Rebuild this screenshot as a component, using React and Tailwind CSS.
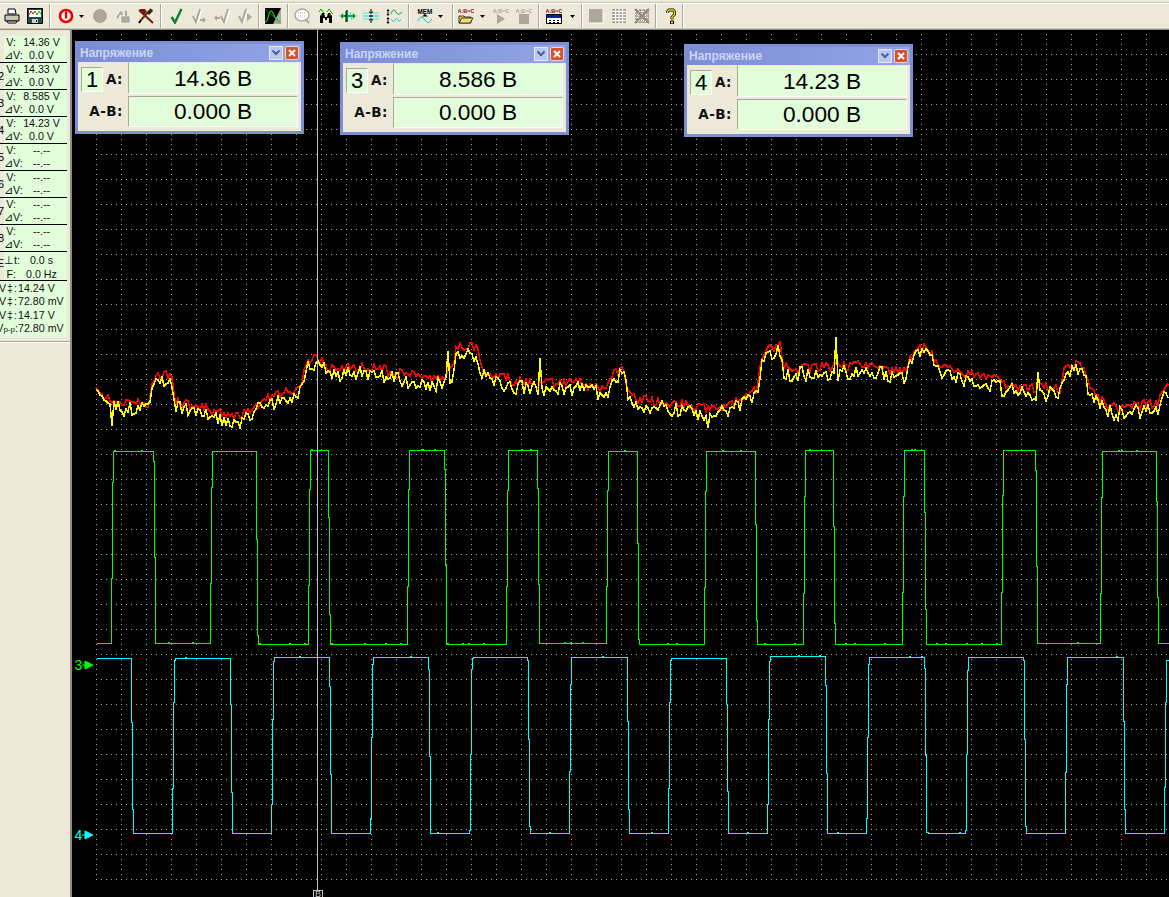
import React from "react";

const FONT = "[font-family:'Liberation_Sans',Arial,sans-serif]";

function rng(seed) {
  let a = seed;
  return () => {
    a |= 0; a = (a + 0x6d2b79f5) | 0;
    let t = Math.imul(a ^ (a >>> 15), 1 | a);
    t = (t + Math.imul(t ^ (t >>> 7), 61 | t)) ^ t;
    return ((t ^ (t >>> 14)) >>> 0) / 4294967296;
  };
}

const GREEN = [[110,578],[111,482],[112,451],[151,461],[152,557],[153,643],[206,583],[207,487],[208,451],[251,539],[252,635],[253,644],[301,585],[302,489],[303,450],[320,517],[321,614],[322,644],[397,586],[398,489],[399,450],[433,469],[434,565],[435,644],[493,586],[494,490],[495,450],[523,488],[524,584],[525,643],[589,586],[590,490],[591,451],[637,543],[638,639],[639,644],[702,587],[703,491],[704,451],[751,524],[752,620],[753,644],[798,593],[799,496],[800,450],[827,526],[828,623],[829,644],[894,592],[895,496],[896,450],[915,512],[916,609],[917,644],[990,592],[991,495],[992,450],[1023,470],[1024,566],[1025,643],[1086,593],[1087,497],[1088,451],[1140,501],[1141,597],[1142,643],[1169,643]].map(([x, y], i, all) => {
  if (i === all.length - 1) return [x, y];
  return [Math.round(x < 630 ? 90 + (x - 90) * 1.0331 : 630 + (x - 630) * 1.0313), y];
});
const CYAN = [[131,722],[132,809],[133,833],[172,788],[173,702],[174,660],[175,658],[230,704],[231,792],[232,833],[271,804],[272,719],[273,661],[274,657],[329,686],[330,774],[331,833],[370,818],[371,737],[372,664],[373,657],[428,669],[429,756],[430,833],[469,830],[470,754],[471,669],[472,658],[473,657],[527,660],[528,739],[529,826],[530,833],[569,771],[570,684],[571,657],[627,721],[628,809],[629,833],[668,788],[669,702],[670,660],[671,658],[726,704],[727,791],[728,833],[767,804],[768,719],[769,661],[770,656],[825,685],[826,773],[827,833],[866,818],[867,737],[868,664],[869,657],[924,668],[925,755],[926,832],[928,833],[965,830],[966,754],[967,670],[968,657],[1023,660],[1024,739],[1025,826],[1026,833],[1065,772],[1066,684],[1067,657],[1123,721],[1124,809],[1125,833],[1164,787],[1165,702],[1166,660],[1169,658]];

function stepPath(start, pts, prob, seed) {
  const r = rng(seed);
  let [x, y] = start;
  let d = `M${x} ${y}`;
  for (const [nx, ny] of pts) {
    let cx = x;
    while (cx + 3 < nx) {
      if (r() < prob) d += `H${cx + 1}V${y - 1}H${cx + 2}V${y}`;
      cx += 3;
    }
    d += `H${nx}V${ny}`;
    x = nx; y = ny;
  }
  return d;
}

const BASE = [[96,392],[110,405],[123,407],[140,407],[148,408],[153,385],[162,378],[172,380],[175,405],[190,410],[207,413],[223,418],[240,421],[253,410],[270,402],[290,395],[302,388],[307,362],[323,363],[327,373],[357,372],[380,373],[413,380],[443,383],[452,373],[457,350],[477,352],[482,375],[513,385],[540,387],[580,387],[607,393],[612,380],[623,373],[628,393],[637,403],[680,408],[707,413],[740,405],[757,393],[762,362],[770,353],[780,347],[783,372],[830,372],[870,368],[903,377],[913,357],[927,350],[940,372],[987,382],[1023,392],[1060,392],[1065,372],[1083,367],[1088,388],[1107,410],[1120,412],[1130,410],[1157,408],[1167,393],[1170,392]];
const SPIKES = { 112: 426, 240: 428, 448: 351, 540: 358, 708: 428, 836: 337, 1038: 372, 1118: 420 };

function baseAt(x) {
  for (let i = 1; i < BASE.length; i++) {
    if (x <= BASE[i][0]) {
      const [x0, y0] = BASE[i - 1], [x1, y1] = BASE[i];
      return y0 + ((y1 - y0) * (x - x0)) / (x1 - x0);
    }
  }
  return 392;
}

function noisy(amp, off, seed, spikes) {
  const r = rng(seed);
  let d = "";
  for (let x = 96; x <= 1169; x += 2) {
    let y = baseAt(x) + off + (r() - 0.5) * amp;
    if (spikes && SPIKES[x] !== undefined) y = SPIKES[x];
    d += `${d ? "L" : "M"}${x} ${Math.round(y)}`;
  }
  return d;
}

const SECTIONS = [
  ["", "14.36 V", "0.0 V"],
  ["2", "14.33 V", "0.0 V"],
  ["3", "8.585 V", "0.0 V"],
  ["4", "14.23 V", "0.0 V"],
  ["5", "--.--", "--.--"],
  ["6", "--.--", "--.--"],
  ["7", "--.--", "--.--"],
  ["8", "--.--", "--.--"],
];

function Section({ item }) {
  return (
    <div className="flex h-[27px] border-b border-black">
      <div className="flex w-[4px] justify-end overflow-hidden text-[11px] leading-[26px] text-black">
        <span className="shrink-0">{item[0]}</span>
      </div>
      <div className="w-[63px] bg-[#e1fdda] text-[10.67px] leading-[13px] text-[#111]">
        <div className="flex h-[13px]">
          <span className="w-[12px] shrink-0 text-right">V:</span>
          <span className="flex-1 text-center">{item[1]}</span>
        </div>
        <div className="flex h-[13px]">
          <span className="w-[12px] shrink-0 text-right whitespace-nowrap">⊿V:</span>
          <span className="flex-1 text-center">{item[2]}</span>
        </div>
      </div>
    </div>
  );
}

function LeftPanel() {
  return (
    <div className={`flex h-full w-[72px] shrink-0 flex-col border-r-2 border-[#8f8c80] bg-[#ece9d8] pt-[6px] ${FONT}`}>
      <div className="w-[67px]">
        {SECTIONS.map((s, i) => (
          <Section key={i} item={s} />
        ))}
        <div className="flex h-[29px] border-b border-black">
          <div className="flex w-[4px] justify-end overflow-hidden text-[11px] leading-[22px] text-black">
            <span className="shrink-0">E</span>
          </div>
          <div className="w-[63px] bg-[#e1fdda] pt-px text-[10.67px] leading-[14px] text-[#111]">
            <div className="flex h-[14px]">
              <span className="w-[12px] shrink-0 text-right whitespace-nowrap">⊥t:</span>
              <span className="flex-1 text-center">0.0 s</span>
            </div>
            <div className="flex h-[14px]">
              <span className="w-[12px] shrink-0 text-right">F:</span>
              <span className="flex-1 text-center">0.0 Hz</span>
            </div>
          </div>
        </div>
        <div className="h-[56px] bg-[#e1fdda] pt-[1px] text-[10.67px] leading-[13.4px] text-[#111]">
          {["14.24 V", "72.80 mV", "14.17 V", "72.80 mV"].map((v, i) => (
            <div key={i} className="flex h-[13.4px] whitespace-nowrap">
              <div className="flex w-[18px] shrink-0 justify-end overflow-hidden">
                {i === 3 ? (
                  <span className="shrink-0">V<span className="text-[8px]">p-p</span>:</span>
                ) : (
                  <span className="shrink-0 tracking-[1px]">V‡:</span>
                )}
              </div>
              <span>{v}</span>
            </div>
          ))}
        </div>
      </div>
      <div className="mt-[4px] h-[2px] border-t border-[#aca899] bg-white" />
    </div>
  );
}

function Sep({ className }) {
  return <div className={`h-[24px] w-[2px] border-l border-[#aca899] bg-white ${className}`} />;
}

function Arrow({ className }) {
  return (
    <svg width="5" height="3" viewBox="0 0 5 3" className={className}>
      <path d="M0 0h5L2.5 3z" fill="#000" />
    </svg>
  );
}

function Ico({ className, children }) {
  return (
    <svg width="16" height="16" viewBox="0 0 16 16" className={`shrink-0 ${className}`}>
      {children}
    </svg>
  );
}

const GC = "#aca899";

function GrayCheck({ extra }) {
  return (
    <>
      <path d="M2 8l3 6 4-13" fill="none" stroke="#fff" strokeWidth="2.4" transform="translate(1 1)" />
      <path d="M2 8l3 6 4-13" fill="none" stroke={GC} strokeWidth="2" />
      {extra}
    </>
  );
}

function AbcText({ fill, y = 5 }) {
  return (
    <text x="8" y={y} textAnchor="middle" fontSize="5.6" fontWeight="700" fontFamily="Liberation Sans, sans-serif" fill={fill}>
      A:B=C
    </text>
  );
}

function Toolbar() {
  return (
    <div className="h-[30px] shrink-0 bg-[#ece9d8]">
      <div className="h-[3px] border-b border-[#c9c6b6]" />
      <div className="h-[1px] bg-white" />
      <div className="flex h-[24px] items-center pl-[4px]">
        <Ico>
          <path d="M4 1h7l1 5H4z" fill="#fff" stroke="#000" />
          <path d="M1 7h14v6H1z" fill="#c8c8c8" stroke="#000" />
          <path d="M3 13l1 2h8l1-2z" fill="#fff" stroke="#000" />
          <path d="M9 9h4v1H9z" fill="#e8d800" />
          <path d="M3 6h10" stroke="#666" />
        </Ico>
        <Ico className="ml-[7px]">
          <path d="M.5.5h15v15H.5z" fill="#1f4d4d" stroke="#000" />
          <path d="M2 2h12v7H2z" fill="#fff" />
          <path d="M2 7l2-4 2 3 2-3" fill="none" stroke="#e00" />
          <path d="M8 3l2 4 2-4 2 3" fill="none" stroke="#0b0" />
          <path d="M5 11h6v4H5z" fill="#d0d0d0" />
          <path d="M9 12h1v2H9z" fill="#000" />
        </Ico>
        <Sep className="ml-[6px]" />
        <Ico className="ml-[7px]">
          <circle cx="8" cy="8" r="6" fill="#fff" stroke="#e00" strokeWidth="2.6" />
          <path d="M8 3.500v7" stroke="#e00" strokeWidth="2.4" />
        </Ico>
        <Arrow className="ml-[5px]" />
        <Ico className="ml-[8px]">
          <circle cx="8" cy="8" r="7" fill={GC} />
        </Ico>
        <Ico className="ml-[7px]">
          <path d="M1 9l5-7 2 3v3L5 7 3 12z" fill={GC} stroke="#fff" strokeWidth=".5" />
          <path d="M6 8h9v7H6z" fill={GC} stroke="#fff" strokeWidth=".5" />
          <path d="M10 3h2v5h-2z" fill={GC} />
        </Ico>
        <Ico className="ml-[7px]">
          <path d="M1 2l14 13" stroke="#7a1616" strokeWidth="2" />
          <path d="M13 1L3 12" stroke="#5a3a10" strokeWidth="2" />
          <path d="M2 1h5l2 3-3 3-4-3z" fill="#7a1616" />
          <path d="M9 5l5-4 1 2-4 4z" fill="#222" />
          <path d="M3 12l-2 3" stroke="#000" strokeWidth="2" />
        </Ico>
        <Sep className="ml-[6px]" />
        <Ico className="ml-[7px]">
          <path d="M2.500 9l3.500 5.500L12.500 1" fill="none" stroke="#0a8030" strokeWidth="2.4" />
        </Ico>
        <Ico className="ml-[6px]">
          <GrayCheck extra={<path d="M9 11h3V9l3 3-3 3v-2H9z" fill={GC} />} />
        </Ico>
        <Ico className="ml-[7px]">
          <g transform="translate(5 0)">
            <GrayCheck />
          </g>
          <path d="M6 9H3V7L0 10l3 3v-2h3z" fill={GC} />
        </Ico>
        <Ico className="ml-[7px]">
          <GrayCheck extra={<path d="M10 5l5 4-5 4z" fill={GC} />} />
        </Ico>
        <Sep className="ml-[5px]" />
        <Ico className="ml-[5px]">
          <path d="M0 0h16v16H0z" fill="#000" />
          <path d="M8 16L16 0v16z" fill={GC} />
          <path d="M0 14c4 0 3-11 6-11s3 11 10 11" fill="none" stroke="#00e000" strokeWidth="1.2" />
          <path d="M0 1l16 14" stroke="#888" strokeWidth=".6" />
        </Ico>
        <Sep className="ml-[6px]" />
        <Ico className="ml-[5px]">
          <ellipse cx="8" cy="7" rx="7" ry="6" fill="#fff" stroke={GC} strokeWidth="1.4" />
          <path d="M4 5h8M4 8h8" stroke={GC} strokeDasharray="1 1" />
          <path d="M11 11l4 4" stroke={GC} strokeWidth="2" />
        </Ico>
        <Ico className="ml-[8px]">
          <path d="M2 15V8l2-3h2l1 4h2l1-4h2l2 3v7h-3V10H9v2H7v-2H5v5z" fill="#000" />
          <path d="M1 4l2-3 2 3 2 2M9 4l2-3 2 3 2 2" fill="none" stroke="#00b000" />
          <path d="M3 7h1M12 7h1" stroke="#00e000" />
        </Ico>
        <Ico className="ml-[6px]">
          <path d="M0 8l3-3v2h3V2h2v5h5V5l3 3-3 3V9H8v5H6V9H3v2z" fill="#009a30" />
          <path d="M6 3v11" stroke="#000" />
          <path d="M10 4l2 8" stroke="#00e8e8" />
        </Ico>
        <Ico className="ml-[7px]">
          <path d="M0 8h16" stroke="#00e0e0" />
          <path d="M0 5h16M0 11h16" stroke="#00e0e0" strokeWidth=".6" />
          <path d="M8 1v14" stroke="#000" strokeDasharray="2 1" />
          <path d="M6 4h4M6 12h4M6 8h4" stroke="#000" />
        </Ico>
        <Ico className="ml-[7px]">
          <path d="M2 2v5M2 10v5" stroke="#000" />
          <path d="M.5 3L2 1l1.500 2zM.5 6L2 8l1.500-2zM.5 11L2 9l1.500 2zM.5 14L2 16l1.500-2z" fill="#000" />
          <path d="M5 6c2-5 3-5 5-2s3 3 6 0" fill="none" stroke="#00a040" />
          <path d="M5 11c2 3 3 3 4 1s2-2 3 0 2 1 3-1" fill="none" stroke="#00c8e0" />
        </Ico>
        <Sep className="ml-[6px]" />
        <Ico className="ml-[7px]">
          <text x="8" y="5.500" textAnchor="middle" fontSize="6.400" fontWeight="700" fontFamily="Liberation Sans, sans-serif" fill="#000">MEM</text>
          <path d="M5 8.500l3-2.500 3 2.500z" fill="#000" />
          <path d="M1 13c2-5 4-5 7-1s4 3 7-1" fill="none" stroke="#00c8d8" />
        </Ico>
        <Arrow className="ml-[5px]" />
        <Sep className="ml-[9px]" />
        <Ico className="ml-[4px]">
          <AbcText fill="#8a1010" />
          <path d="M1 8h5l1 1h6v6H1z" fill="#d8c860" stroke="#000" strokeWidth=".7" />
          <path d="M1 15l3-5h11l-3 5z" fill="#f0e070" stroke="#000" strokeWidth=".7" />
        </Ico>
        <Arrow className="ml-[6px]" />
        <Ico className="ml-[8px]">
          <AbcText fill={GC} />
          <path d="M4 6l8 5-8 5z" fill={GC} />
        </Ico>
        <Ico className="ml-[7px]">
          <AbcText fill={GC} />
          <path d="M3 6h10v10H3z" fill={GC} />
        </Ico>
        <Sep className="ml-[6px]" />
        <Ico className="ml-[6px]">
          <AbcText fill="#8a1010" />
          <path d="M.5 6.500h15v9H.5z" fill="#fff" stroke="#000" />
          <path d="M1 7h14v3H1z" fill="#0a24a0" />
          <path d="M3 12h2v1H3zM7 12h2v1H7zM11 12h2v1h-2zM3 14h2v1H3zM7 14h2v1H7zM11 14h2v1h-2z" fill="#000" />
        </Ico>
        <Arrow className="ml-[8px]" />
        <Sep className="ml-[6px]" />
        <Ico className="ml-[5px]">
          <path d="M1 1h14v14H1z" fill={GC} />
          <path d="M15 1v14H1" fill="none" stroke="#fff" />
        </Ico>
        <Ico className="ml-[7px]">
          <path d="M1 1h14v14H1z" fill={GC} />
          <path d="M1 3.500h14M1 6.500h14M1 9.500h14M1 12.500h14M4.500 1v14M8 1v14M11.500 1v14" stroke="#fff" />
        </Ico>
        <Ico className="ml-[7px]">
          <path d="M1 1h14v14H1z" fill={GC} />
          <path d="M1 3.500h14M1 6.500h14M1 9.500h14M1 12.500h14M4.500 1v14M8 1v14M11.500 1v14" stroke="#fff" strokeDasharray="1 1" />
          <path d="M1 1l14 14M15 1L1 15" stroke="#8d8a7c" strokeWidth="2" />
        </Ico>
        <Sep className="ml-[5px]" />
        <Ico className="ml-[6px]">
          <path d="M4.500 5V3.500L6 2h4l1.500 1.500v3L9 9v2.500" fill="none" stroke="#000" strokeWidth="2.800" />
          <path d="M4.500 5V3.500L6 2h4l1.500 1.500v3L9 9v2.500" fill="none" stroke="#f0e000" strokeWidth="1.400" />
          <path d="M7.500 13h3v3h-3z" fill="#f0e000" stroke="#000" />
        </Ico>
        <Sep className="ml-[3px]" />
      </div>
      <div className="h-[2px] border-b border-[#8f8c80] bg-[#c9c6b6]" />
    </div>
  );
}

function Win({ pos, n, a, ab }) {
  return (
    <div className={`absolute ${pos} h-[93px] w-[229px] border-[3px] border-[#7d8ed4] bg-gradient-to-r from-[#7b8dd6] to-[#93a5e6]`}>
      <div className="flex h-[18px] items-center justify-between pr-[2px] pl-[2px]">
        <span className={`text-[12px] leading-none font-bold text-[#c9d5f5] ${FONT}`}>Напряжение</span>
        <div className="flex gap-[2px]">
          <div className="flex h-[14px] w-[14px] items-center justify-center border border-[#e4eafa] bg-[#b9c8f1]">
            <svg width="10" height="8" viewBox="0 0 10 8">
              <path d="M1.500 1.500L5 5l3.500-3.500" fill="none" stroke="#44618f" strokeWidth="2" />
            </svg>
          </div>
          <div className="flex h-[14px] w-[14px] items-center justify-center rounded-[2px] border border-[#e9d5cc] bg-[#d9512c]">
            <svg width="10" height="10" viewBox="0 0 10 10">
              <path d="M2 2l6 6M8 2L2 8" stroke="#fff" strokeWidth="2" />
            </svg>
          </div>
        </div>
      </div>
      <div className={`flex h-[69px] bg-[#ece9d8] ${FONT}`}>
        <div className="flex w-[50px] flex-col">
          <div className="flex h-[33px] items-center justify-between pt-[2px] pr-[5px] pl-[3px]">
            <div className="flex h-[25px] w-[22px] items-center justify-center border border-r-white border-b-white border-t-[#aca899] border-l-[#aca899] bg-[#e1fdda] text-[22px] leading-none text-black">
              {n}
            </div>
            <span className="text-[13.5px] font-bold tracking-[0.5px] text-[#111] [font-family:'DejaVu_Sans',sans-serif]">A:</span>
          </div>
          <div className="flex h-[33px] items-center justify-end pr-[5px]">
            <span className="text-[13.5px] font-bold tracking-[0.5px] text-[#111] [font-family:'DejaVu_Sans',sans-serif]">A-B:</span>
          </div>
        </div>
        <div className="flex w-[170px] flex-col gap-[2px] pb-[4px]">
          <div className="flex h-[32px] items-center justify-center border border-r-white border-b-white border-t-[#ece9d8] border-l-[#aca899] bg-[#e1fdda] text-[22.67px] leading-none text-black">
            {a}
          </div>
          <div className="flex h-[31px] items-center justify-center border border-r-white border-b-white border-t-[#aca899] border-l-[#aca899] bg-[#e1fdda] text-[22.67px] leading-none text-black">
            {ab}
          </div>
        </div>
      </div>
    </div>
  );
}

function Traces() {
  return (
    <svg className="block" width="1097" height="867" viewBox="72 30 1097 867">
      <defs>
        <pattern id="rowdots" patternUnits="userSpaceOnUse" x="96" y="54" width="5" height="25">
          <rect width="1" height="1" fill="#a8a8a8" />
        </pattern>
        <pattern id="coldots" patternUnits="userSpaceOnUse" x="96" y="34" width="25" height="5">
          <rect width="1" height="1" fill="#a8a8a8" />
        </pattern>
      </defs>
      <rect x="96" y="54" width="1073" height="826" fill="url(#rowdots)" />
      <rect x="96" y="34" width="1073" height="846" fill="url(#coldots)" />
      <g fill="none" shapeRendering="crispEdges" strokeWidth="1">
        <path d={noisy(10, -4, 11, false)} stroke="#ff0000" strokeWidth="1.5" />
        <path d={noisy(15, 2, 29, true)} stroke="#ffff00" strokeWidth="1.5" />
        <path d={stepPath([96, 643], GREEN, 0.12, 5)} stroke="#00ff00" transform="translate(.5 .5)" />
        <path d={stepPath([96, 658], CYAN, 0.06, 9)} stroke="#00ffff" transform="translate(.5 .5)" />
        <path d="M317.500 30V890" stroke="#c0c0c0" />
        <path d="M313.500 890.500h9v7h-9z" stroke="#c0c0c0" />
      </g>
      <text x="315" y="897" fontSize="9" fill="#c0c0c0" fontFamily="Liberation Sans, sans-serif">B</text>
      <text x="74.500" y="670" fontSize="14" fill="#00ff00" fontFamily="Liberation Sans, sans-serif">3</text>
      <path d="M82 665h3M85 661l8 4-8 4z" fill="#00ff00" stroke="#00ff00" strokeWidth="1" />
      <text x="74.500" y="840" fontSize="14" fill="#00ffff" fontFamily="Liberation Sans, sans-serif">4</text>
      <path d="M82 835h3M85 831l8 4-8 4z" fill="#00ffff" stroke="#00ffff" strokeWidth="1" />
    </svg>
  );
}

export default function App() {
  return (
    <div className="flex h-[897px] w-[1169px] flex-col overflow-hidden bg-black">
      <Toolbar />
      <div className="flex min-h-0 flex-1">
        <LeftPanel />
        <div className="relative flex-1 overflow-hidden bg-black">
          <Traces />
          <Win pos="left-[3px] top-[11px]" n="1" a="14.36 В" ab="0.000 В" />
          <Win pos="left-[268px] top-[12px]" n="3" a="8.586 В" ab="0.000 В" />
          <Win pos="left-[612px] top-[14px]" n="4" a="14.23 В" ab="0.000 В" />
        </div>
      </div>
    </div>
  );
}
